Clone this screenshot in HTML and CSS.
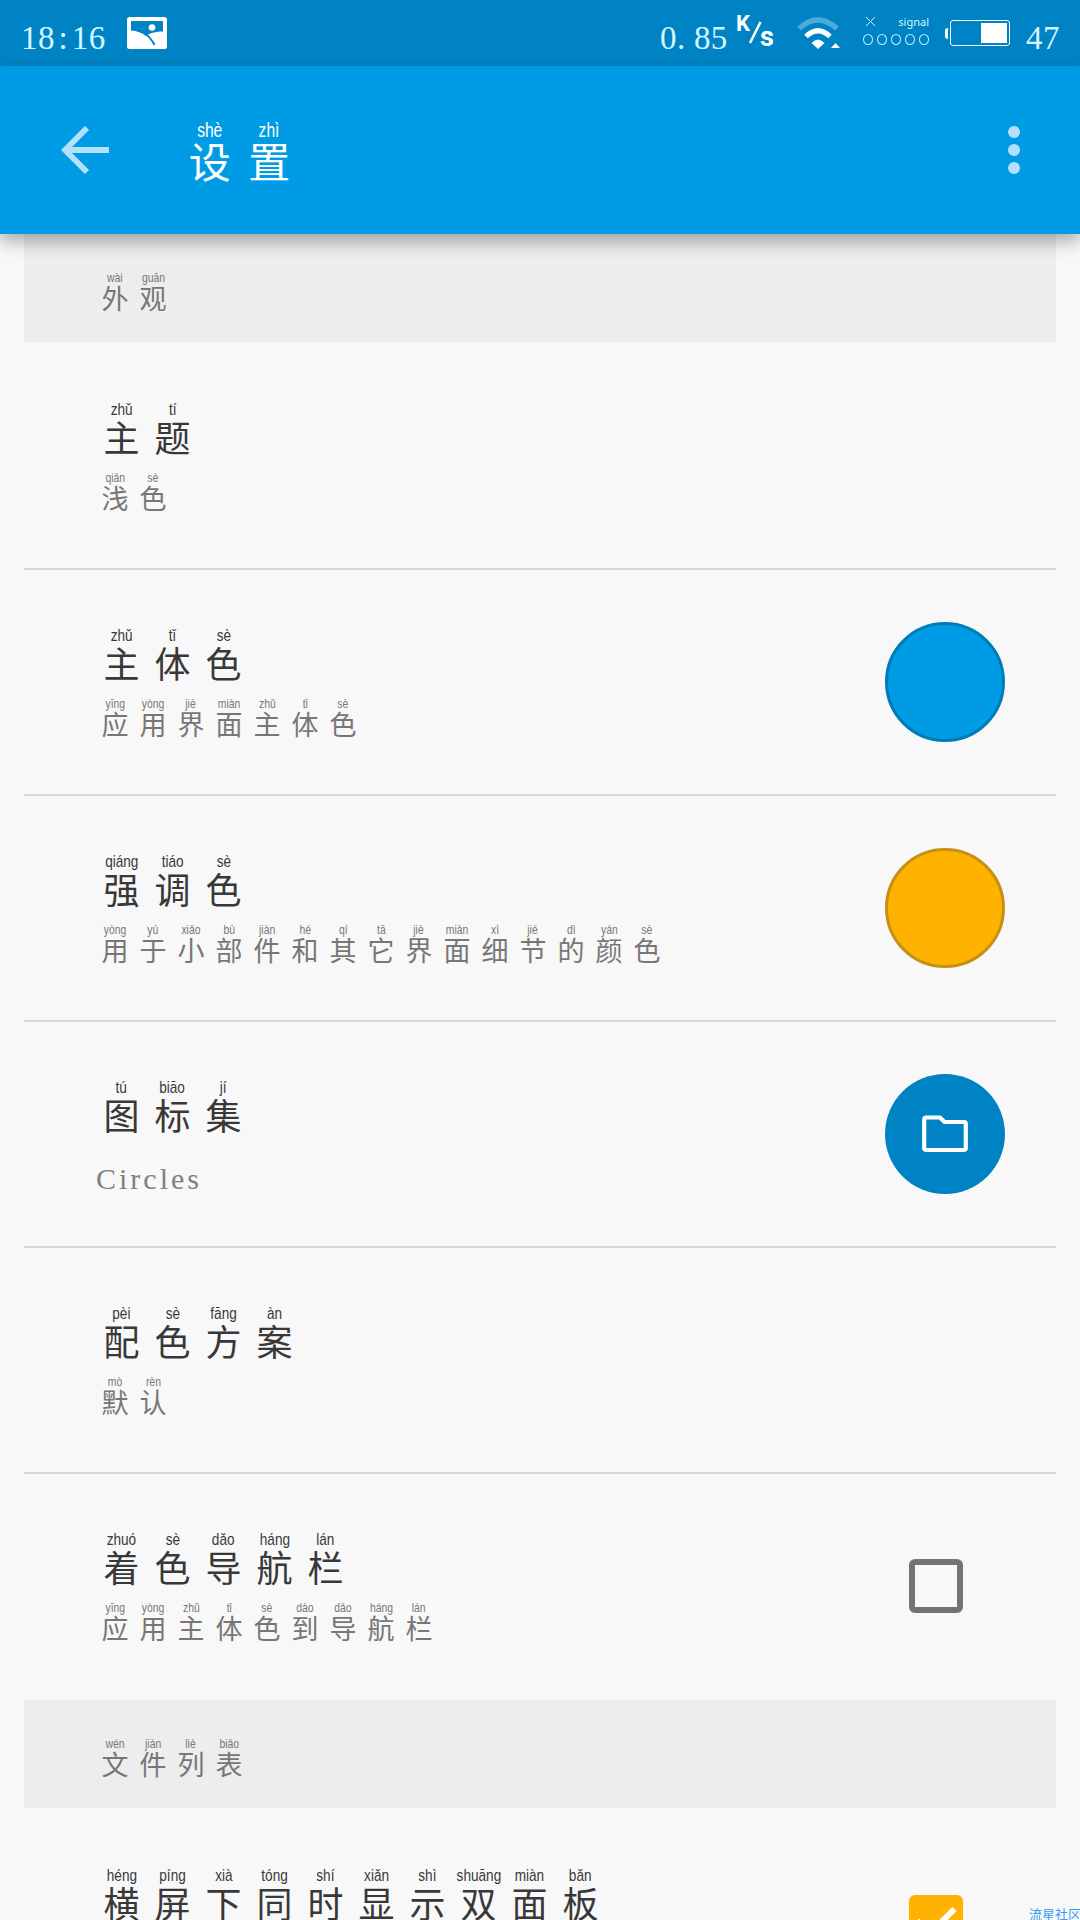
FILE: index.html
```
<!DOCTYPE html>
<html lang="zh-CN">
<head>
    <meta charset="UTF-8">
    <meta name="viewport" content="width=device-width, initial-scale=1.0">
    <title>设置</title>
    <link rel="stylesheet" href="styles.css">
</head>
<body>

<div class="status-bar">
    <span class="clock">18<span class="colon">:</span>16</span>
    <svg class="gallery" width="40" height="32" viewBox="0 0 40 32">
        <path fill="#fff" fill-rule="evenodd" d="M2.500 0h35a2.500 2.500 0 0 1 2.500 2.500v27a2.500 2.500 0 0 1-2.500 2.500h-35a2.500 2.500 0 0 1-2.500-2.500v-27a2.500 2.500 0 0 1 2.500-2.500zM4 4v9.500c6 .5 11 2 15 5.500 2-2 8-4.500 17-4.500V4z"/>
        <circle cx="25" cy="10.500" r="3.300" fill="#fff"/>
        <path d="M17 16c5 3 8 7 10.500 12" fill="none" stroke="#0083c4" stroke-width="2"/>
    </svg>
    <span class="speed">0<span class="dot">.</span>85</span>
    <span class="unit">
        <b class="unit-k">K</b>
        <svg width="14" height="24" viewBox="0 0 14 24"><path d="M12.500 1L2 22" stroke="#fff" stroke-width="2.500"/></svg>
        <b class="unit-s">s</b>
    </span>
    <svg class="wifi" width="44" height="33" viewBox="0 0 44 33">
        <path d="M2 11.500Q21 -5.500 40 11.500" fill="none" stroke="#4dabdc" stroke-width="5.500"/>
        <path d="M9 19.500Q21 8 33 19.500" fill="none" stroke="#fff" stroke-width="5"/>
        <path d="M14.500 26q6.500-7 13 0L21 32z" fill="#fff"/>
        <path d="M34 31l4.500-5 4.500 5z" fill="#fff"/>
    </svg>
    <div class="signal">
        <div class="signal-top">
            <svg width="11" height="11" viewBox="0 0 11 11"><path d="M1 1l9 9M10 1l-9 9" stroke="#c8f2ff" stroke-width="1"/></svg>
            <span>signal</span>
        </div>
        <div class="signal-dots"><i></i><i></i><i></i><i></i><i></i></div>
    </div>
    <div class="battery">
        <span class="battery-tip"></span>
        <span class="battery-body"><span class="battery-level"></span></span>
    </div>
    <span class="percent">47</span>
</div>

<header class="toolbar">
    <svg class="back" width="48" height="48" viewBox="0 0 48 48">
        <path d="M26 2L4 24l22 22M3 24h45" fill="none" stroke="#b3e1fa" stroke-width="5.800"/>
    </svg>
    <h1 class="pinyin">
        <ruby>设<rt>shè</rt></ruby><ruby>置<rt>zhì</rt></ruby>
    </h1>
    <div class="more"><i></i><i></i><i></i></div>
</header>

<main class="list">
    <div class="section">
        <div class="summary pinyin"><ruby>外<rt>wài</rt></ruby><ruby>观<rt>guān</rt></ruby></div>
    </div>

    <div class="row">
        <div class="text">
            <div class="title pinyin"><ruby>主<rt>zhǔ</rt></ruby><ruby>题<rt>tí</rt></ruby></div>
            <div class="summary pinyin"><ruby>浅<rt>qiǎn</rt></ruby><ruby>色<rt>sè</rt></ruby></div>
        </div>
    </div>

    <div class="row">
        <div class="text">
            <div class="title pinyin"><ruby>主<rt>zhǔ</rt></ruby><ruby>体<rt>tǐ</rt></ruby><ruby>色<rt>sè</rt></ruby></div>
            <div class="summary pinyin"><ruby>应<rt>yīng</rt></ruby><ruby>用<rt>yòng</rt></ruby><ruby>界<rt>jiè</rt></ruby><ruby>面<rt>miàn</rt></ruby><ruby>主<rt>zhǔ</rt></ruby><ruby>体<rt>tǐ</rt></ruby><ruby>色<rt>sè</rt></ruby></div>
        </div>
        <div class="circle primary"></div>
    </div>

    <div class="row">
        <div class="text">
            <div class="title pinyin"><ruby>强<rt>qiáng</rt></ruby><ruby>调<rt>tiáo</rt></ruby><ruby>色<rt>sè</rt></ruby></div>
            <div class="summary pinyin"><ruby>用<rt>yòng</rt></ruby><ruby>于<rt>yú</rt></ruby><ruby>小<rt>xiǎo</rt></ruby><ruby>部<rt>bù</rt></ruby><ruby>件<rt>jiàn</rt></ruby><ruby>和<rt>hé</rt></ruby><ruby>其<rt>qí</rt></ruby><ruby>它<rt>tā</rt></ruby><ruby>界<rt>jiè</rt></ruby><ruby>面<rt>miàn</rt></ruby><ruby>细<rt>xì</rt></ruby><ruby>节<rt>jié</rt></ruby><ruby>的<rt>dì</rt></ruby><ruby>颜<rt>yán</rt></ruby><ruby>色<rt>sè</rt></ruby></div>
        </div>
        <div class="circle accent"></div>
    </div>

    <div class="row">
        <div class="text">
            <div class="title pinyin"><ruby>图<rt>tú</rt></ruby><ruby>标<rt>biāo</rt></ruby><ruby>集<rt>jí</rt></ruby></div>
            <div class="latin">Circles</div>
        </div>
        <div class="circle folder">
            <svg width="46" height="38" viewBox="0 0 46 38">
                <path d="M4 2.500h14l4.500 4.500H42a1.800 1.800 0 0 1 1.800 1.800v24.400A1.800 1.800 0 0 1 42 35H4a1.800 1.800 0 0 1-1.800-1.800V4.300A1.800 1.800 0 0 1 4 2.500z" fill="none" stroke="#fff" stroke-width="4.200"/>
            </svg>
        </div>
    </div>

    <div class="row">
        <div class="text">
            <div class="title pinyin"><ruby>配<rt>pèi</rt></ruby><ruby>色<rt>sè</rt></ruby><ruby>方<rt>fāng</rt></ruby><ruby>案<rt>àn</rt></ruby></div>
            <div class="summary pinyin"><ruby>默<rt>mò</rt></ruby><ruby>认<rt>rèn</rt></ruby></div>
        </div>
    </div>

    <div class="row last">
        <div class="text">
            <div class="title pinyin"><ruby>着<rt>zhuó</rt></ruby><ruby>色<rt>sè</rt></ruby><ruby>导<rt>dǎo</rt></ruby><ruby>航<rt>háng</rt></ruby><ruby>栏<rt>lán</rt></ruby></div>
            <div class="summary pinyin"><ruby>应<rt>yīng</rt></ruby><ruby>用<rt>yòng</rt></ruby><ruby>主<rt>zhǔ</rt></ruby><ruby>体<rt>tǐ</rt></ruby><ruby>色<rt>sè</rt></ruby><ruby>到<rt>dào</rt></ruby><ruby>导<rt>dǎo</rt></ruby><ruby>航<rt>háng</rt></ruby><ruby>栏<rt>lán</rt></ruby></div>
        </div>
        <div class="checkbox"></div>
    </div>

    <div class="section">
        <div class="summary pinyin"><ruby>文<rt>wén</rt></ruby><ruby>件<rt>jiàn</rt></ruby><ruby>列<rt>liè</rt></ruby><ruby>表<rt>biǎo</rt></ruby></div>
    </div>

    <div class="row">
        <div class="text">
            <div class="title pinyin"><ruby>横<rt>héng</rt></ruby><ruby>屏<rt>píng</rt></ruby><ruby>下<rt>xià</rt></ruby><ruby>同<rt>tóng</rt></ruby><ruby>时<rt>shí</rt></ruby><ruby>显<rt>xiǎn</rt></ruby><ruby>示<rt>shì</rt></ruby><ruby>双<rt>shuāng</rt></ruby><ruby>面<rt>miàn</rt></ruby><ruby>板<rt>bǎn</rt></ruby></div>
        </div>
        <div class="checkbox checked">
            <svg width="54" height="54" viewBox="0 0 54 54">
                <path d="M8 25.500l13 13L45.500 14" fill="none" stroke="#fff" stroke-width="6"/>
            </svg>
        </div>
    </div>
</main>

<div class="watermark">流星社区</div>

</body>
</html>
```
FILE: styles.css
```
* {
    box-sizing: border-box;
}

body {
    font-family: "Liberation Sans", "Noto Sans CJK SC", sans-serif;
    margin: 0;
    height: 1920px;
    overflow: hidden;
    background-color: #f8f8f8;
    position: relative;
}

/* status bar */
.status-bar {
    display: flex;
    align-items: flex-start;
    height: 66px;
    padding-left: 21px;
    background-color: #0083c4;
    color: #d4f6ff;
}

.clock, .speed, .percent {
    font-family: "Liberation Serif", serif;
    font-size: 33px;
    line-height: 40px;
    margin-top: 18px;
    letter-spacing: 0.400px;
    white-space: nowrap;
}

.clock {
    width: 106px;
}

.colon, .dot {
    display: inline-block;
    width: 17px;
    text-align: center;
}

.dot {
    text-align: left;
}

.gallery {
    margin-top: 17px;
}

.speed {
    width: 76px;
    margin-left: 493px;
}

.unit {
    display: flex;
    width: 37px;
    margin-top: 12px;
    color: #fff;
    font-family: Roboto, sans-serif;
    font-size: 22px;
    line-height: 24px;
}

.unit svg {
    flex: none;
    margin: 9px -2px 0 -2px;
}

.unit-s {
    font-size: 27px;
    margin-top: 13px;
}

.wifi {
    margin: 17px 0 0 24px;
}

.signal {
    width: 68px;
    margin: 16px 0 0 22px;
}

.signal-top {
    display: flex;
    justify-content: space-between;
    padding: 0 2px;
    height: 18px;
    font-family: "Noto Sans", sans-serif;
    font-size: 11px;
    line-height: 12px;
}

.signal-dots {
    display: flex;
    gap: 4px;
}

.signal-dots i {
    width: 10px;
    height: 11px;
    border: 1px solid #c8f2ff;
    border-radius: 50%;
}

.battery {
    display: flex;
    align-items: center;
    margin: 20px 0 0 14px;
}

.battery-tip {
    width: 3px;
    height: 11px;
    margin-right: 2px;
    border-radius: 3px 0 0 3px;
    background-color: #fff;
}

.battery-body {
    display: flex;
    justify-content: flex-end;
    width: 60px;
    height: 26px;
    padding: 2px;
    border: 1px solid #fff;
    border-radius: 3px;
}

.battery-level {
    width: 26px;
    background-color: #fff;
}

.percent {
    margin-left: 16px;
}

/* toolbar */
.toolbar {
    display: flex;
    align-items: flex-start;
    height: 168px;
    padding: 0 60px 0 61px;
    background-color: #009be5;
    box-shadow: 0 8px 16px rgba(0, 0, 0, 0.3);
    color: #fff;
    position: relative;
}

.back {
    margin-top: 60px;
}

h1 {
    margin: 52px 0 0 71px;
}

.more {
    display: flex;
    flex-direction: column;
    gap: 6px;
    margin: 60px 0 0 auto;
}

.more i {
    width: 12px;
    height: 12px;
    border-radius: 50%;
    background-color: #b3e1fa;
}

/* characters with pinyin above */
.pinyin {
    display: flex;
    font-weight: normal;
}

ruby {
    display: flex;
    flex-direction: column-reverse;
    align-items: center;
    font-family: "Noto Sans CJK SC", sans-serif;
}

rt {
    display: block;
    font-family: "Liberation Sans", sans-serif;
    white-space: nowrap;
    transform: scaleX(0.8);
}

h1 ruby {
    width: 59.500px;
    font-size: 42px;
    line-height: 36px;
}

h1 rt {
    font-size: 19.500px;
    line-height: 24px;
}

.title ruby {
    width: 51px;
    font-size: 36px;
    line-height: 32px;
}

.title rt {
    font-size: 17px;
    line-height: 20px;
}

.summary ruby {
    width: 38px;
    font-size: 27px;
    line-height: 26px;
}

.summary rt {
    font-size: 13px;
    line-height: 14px;
}

/* settings list */
.list {
    margin: 0 24px;
}

.section {
    height: 108px;
    margin-bottom: 2px;
    padding: 37px 72px 0;
    background-color: #ededed;
    color: #777;
}

.row {
    display: flex;
    align-items: center;
    height: 226px;
    padding: 0 51px 0 72px;
    border-bottom: 2px solid #d9d9d9;
}

.row.last {
    border-color: transparent;
}

.text {
    align-self: flex-start;
    flex: 1;
    padding-top: 56px;
}

.title {
    color: #383838;
}

.text .summary {
    margin-top: 19px;
    color: #777;
}

.latin {
    margin-top: 29px;
    font-family: "Liberation Serif", serif;
    font-size: 30px;
    line-height: 40px;
    letter-spacing: 3px;
    color: #808080;
}

.circle {
    display: flex;
    align-items: center;
    justify-content: center;
    width: 120px;
    height: 120px;
    border-radius: 50%;
}

.primary {
    background-color: #009be5;
    border: 3px solid #007cb7;
}

.accent {
    background-color: #ffb300;
    border: 3px solid #c69012;
}

.folder {
    background-color: #0083c4;
}

.checkbox {
    width: 54px;
    height: 54px;
    margin-right: 42px;
    border: 6px solid #737373;
    border-radius: 6px;
}

.checkbox.checked {
    border: none;
    background-color: #ffb300;
}

.watermark {
    position: absolute;
    left: 1029px;
    top: 1904px;
    font-family: "Noto Sans CJK SC", sans-serif;
    font-size: 13px;
    line-height: 20px;
    white-space: nowrap;
    color: #3a9cf0;
}
```
